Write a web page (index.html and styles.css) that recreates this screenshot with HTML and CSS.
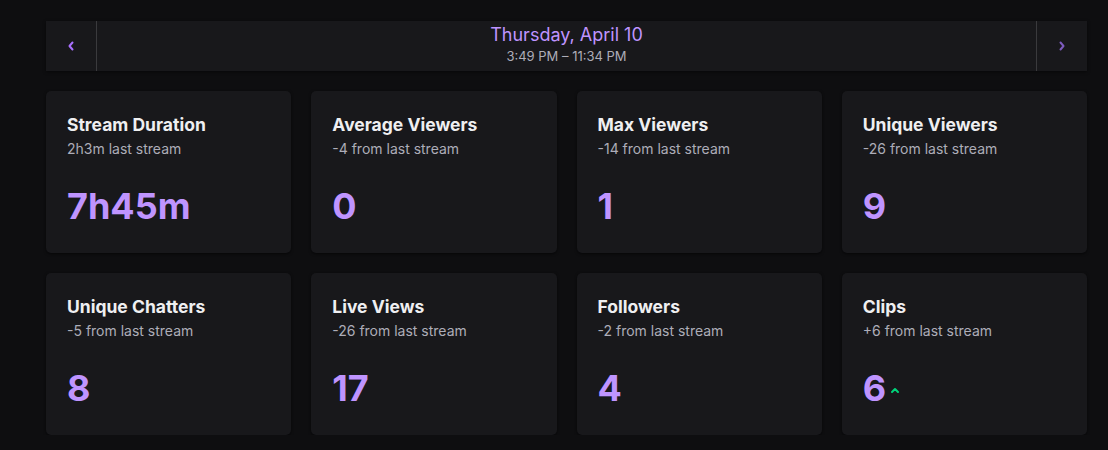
FILE: index.html
```html
<!DOCTYPE html>
<html lang="en">
<head>
<meta charset="utf-8">
<title>Stream Stats</title>
<link rel="stylesheet" href="styles.css">
</head>
<body>
<main class="wrap">
  <div class="datebar">
    <button class="nav-btn nav-prev" aria-label="Previous">
      <svg viewBox="0 0 8 10" width="8" height="10"><path d="M5.5 1.5 L2.5 5 L5.5 8.5" fill="none" stroke="currentColor" stroke-width="2" stroke-linecap="round" stroke-linejoin="round"/></svg>
    </button>
    <div class="date-center">
      <div class="date-title">Thursday, April 10</div>
      <div class="date-time">3:49 PM – 11:34 PM</div>
    </div>
    <button class="nav-btn nav-next" aria-label="Next">
      <svg viewBox="0 0 8 10" width="8" height="10"><path d="M2.5 1.5 L5.5 5 L2.5 8.5" fill="none" stroke="currentColor" stroke-width="2" stroke-linecap="round" stroke-linejoin="round"/></svg>
    </button>
  </div>

  <div class="grid">
    <div class="card"><div class="card-title">Stream Duration</div><div class="card-sub">2h3m last stream</div><div class="card-value">7h45m</div></div>
    <div class="card"><div class="card-title">Average Viewers</div><div class="card-sub">-4 from last stream</div><div class="card-value">0</div></div>
    <div class="card"><div class="card-title">Max Viewers</div><div class="card-sub">-14 from last stream</div><div class="card-value">1</div></div>
    <div class="card"><div class="card-title">Unique Viewers</div><div class="card-sub">-26 from last stream</div><div class="card-value">9</div></div>
    <div class="card"><div class="card-title">Unique Chatters</div><div class="card-sub">-5 from last stream</div><div class="card-value">8</div></div>
    <div class="card"><div class="card-title">Live Views</div><div class="card-sub">-26 from last stream</div><div class="card-value">17</div></div>
    <div class="card"><div class="card-title">Followers</div><div class="card-sub">-2 from last stream</div><div class="card-value">4</div></div>
    <div class="card"><div class="card-title">Clips</div><div class="card-sub">+6 from last stream</div><div class="card-value">6<svg class="up" viewBox="0 0 10 8" width="10" height="8"><path d="M2 6 L5 3 L8 6" fill="none" stroke="currentColor" stroke-width="2" stroke-linecap="round" stroke-linejoin="round"/></svg></div></div>
  </div>
</main>
</body>
</html>
```
FILE: styles.css
```css
* { box-sizing: border-box; }
html, body {
  margin: 0;
  padding: 0;
  background: #0e0e10;
  font-family: Inter, "Noto Sans", "Liberation Sans", sans-serif;
  color: #efeff1;
}
.wrap {
  width: 1041px;
  margin-left: 46px;
  padding-top: 21px;
}
.datebar {
  display: flex;
  height: 50px;
  background: #18181b;
  box-shadow: 0 1px 3px rgba(0,0,0,0.5);
}
.nav-btn {
  width: 51px;
  background: transparent;
  border: none;
  color: #a970ff;
  display: flex;
  align-items: center;
  justify-content: center;
  padding: 0;
}
.nav-prev { border-right: 1px solid #3a3a3d; }
.nav-next { border-left: 1px solid #3a3a3d; color: #7d5bbe; }
.date-center {
  flex: 1;
  display: flex;
  flex-direction: column;
  align-items: center;
  justify-content: center;
  padding-bottom: 3px;
}
.date-title {
  color: #bf94ff;
  font-size: 18px;
  line-height: 22px;
}
.date-time {
  color: #adadb8;
  font-size: 13px;
  line-height: 18px;
  margin-top: 1px;
}
.grid {
  display: grid;
  grid-template-columns: repeat(4, 1fr);
  gap: 20px;
  margin-top: 20px;
}
.card {
  background: #18181b;
  border-radius: 5px;
  height: 162px;
  padding: 23px 20px 0 21px;
  box-shadow: 0 1px 3px rgba(0,0,0,0.6);
}
.card-title {
  font-size: 17.5px;
  font-weight: 700;
  line-height: 22px;
  color: #efeff1;
}
.card-sub {
  font-size: 14px;
  line-height: 18px;
  color: #adadb8;
  margin-top: 4px;
}
.card-value {
  display: flex;
  align-items: center;
  margin-top: 26px;
  font-size: 36px;
  font-weight: 700;
  line-height: 44px;
  color: #bf94ff;
}
.up {
  color: #00d37a;
  margin-left: 4px;
  margin-top: 4px;
}
```
